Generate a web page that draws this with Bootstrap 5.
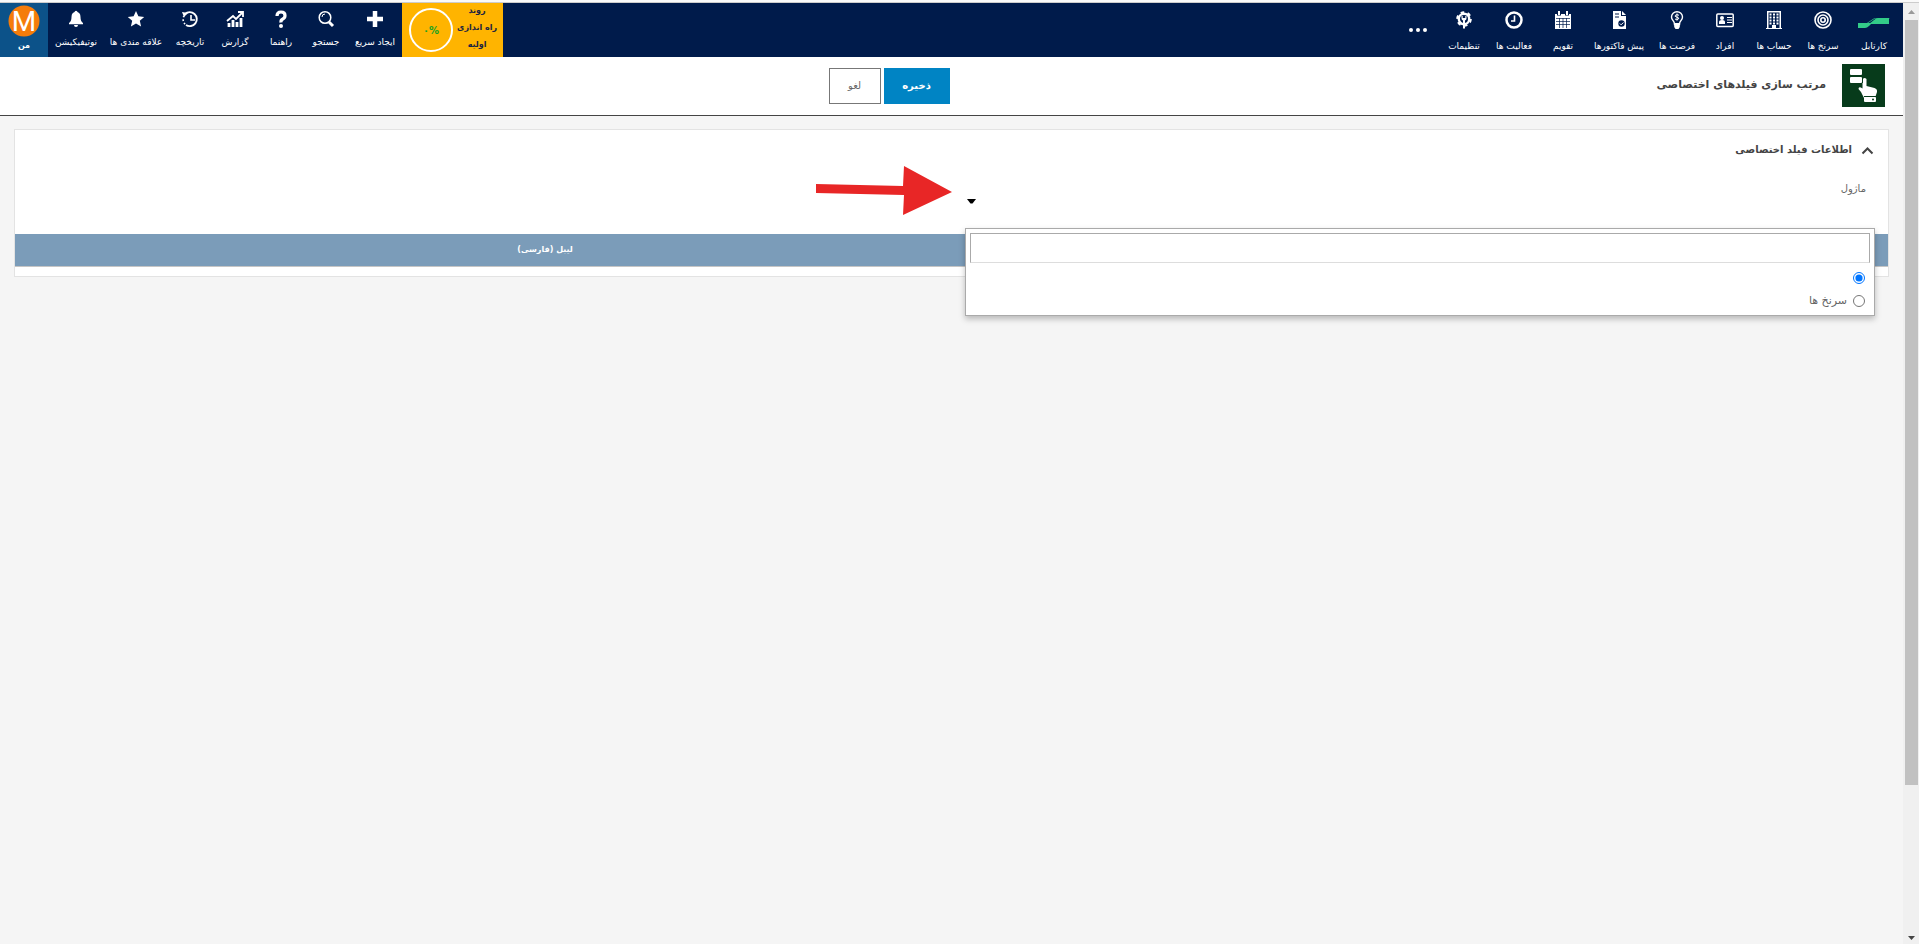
<!DOCTYPE html>
<html lang="fa" dir="rtl">
<head>
<meta charset="utf-8">
<meta name="viewport" content="width=device-width, initial-scale=1">
<title>مرتب سازی فیلدهای اختصاصی</title>
<link href="https://cdn.jsdelivr.net/npm/bootstrap@5.3.0/dist/css/bootstrap.min.css" rel="stylesheet">
<style>
body{font-family:"DejaVu Sans",sans-serif;background:#f5f5f5;color:#444;font-size:10px;height:100vh;overflow:hidden}
.top-strip{height:3px;background:#fafafa;border-bottom:1px solid #ccc}
.main-nav{background:#001b4b;height:54px}
.nav-tile{color:#fff;text-decoration:none;display:flex;flex-direction:column;align-items:center;font-size:9px;line-height:14px;white-space:nowrap;padding-top:7px;gap:7px}
.nav-tile svg{width:18px;height:18px;flex:none}
.apps .nav-tile{padding-top:8px;gap:10px}
.t42{width:42px}.t44{width:44px}.t46{width:46px}.t48{width:48px}.t50{width:50px}.t52{width:52px}.t54{width:54px}.t56{width:56px}.t58{width:58px}.t64{width:64px}
.nav-tile.brand-tile svg{width:32px}
.nav-tile.me-tile{width:48px;background:#0c5289;padding-top:2px;gap:2px;font-size:8px;font-weight:bold}
.me-tile svg{width:32px;height:32px}
.setup{width:101px;background:#ffb400;color:#1c2440;font-size:8px;font-weight:bold;line-height:17px;text-decoration:none;padding:0 6px 6px 7px;white-space:nowrap}
.ring{width:44px;height:44px;border:2px solid #fff;border-radius:50%;color:#1ca321;font-size:10px;margin-top:6px}
.page-head{border-bottom:1px solid #444;height:59px;padding:0 18px 2px}
.page-head h1{font-size:11px;line-height:20px;margin:0;font-weight:bold}
.module-icon{width:43px;height:43px}
.page-head .btn{border-radius:0;height:36px;font-size:10px;line-height:16px;padding:0}
.page-head .btn-save,.btn-save:hover{background:#0084c4;color:#fff;width:66px;font-weight:bold}
.page-head .btn-drop,.btn-drop:hover{border:1px solid #777;color:#666;width:52px;background:#fff}
.actions{gap:3px;padding:1px 2px 0}
.panel{background:#fff;border:1px solid #e3e3e3;margin:13px 14px}
.panel h2{font-size:10px;line-height:20px;margin:0;font-weight:bold}
.panel-title{padding:10px 14px 0;gap:9px}
.field-row{padding:21px 22px 0;height:74px}
.field-row label{font-size:10px;line-height:16px;color:#666}
.picker{width:50%;position:relative;padding-left:12px}
.caret{border:0;background:none;padding:0;width:12px;height:8px;display:block}
.menu{position:absolute;top:47px;right:-9px;left:13px;z-index:5;background:#fff;border:1px solid #aaa;box-shadow:0 3px 6px rgba(0,0,0,.25);height:88px;padding:4px}
.menu input[type=text]{width:100%;height:30px;border:1px solid #aaa;border-bottom-color:#ddd;display:block;outline:0}
.menu .opt{display:flex;align-items:center;gap:6px;height:23px;padding:0 5px;font-size:11px;color:#666}
.opt input{width:12px;height:12px;margin:0}
.menu .opts{padding-top:3px}
.fields{width:100%;margin-bottom:9px}
.fields th{background:#7b9cb9;color:#fff;height:32px;border-bottom:1px solid #c5c5c5;text-align:center;font-size:8px}
.fields .fa-col{width:56.6%}
.arrow{position:absolute;left:816px;top:108px;width:138px;height:52px}
.scroll{width:16px;flex:none;background:#f0f0f0;padding:0 1px 0 2px}
.thumb{background:#c1c1c1;height:81.3%}
.scroll svg{width:13px;height:17px;flex:none}
</style>
<script src="https://cdn.jsdelivr.net/npm/bootstrap@5.3.0/dist/js/bootstrap.bundle.min.js"></script>
</head>
<body class="d-flex flex-column">
<div class="top-strip"></div>
<div class="d-flex flex-fill">
<div class="scroll d-flex flex-column" aria-hidden="true" dir="ltr">
<svg viewBox="0 0 13 17"><path d="M3 11l3.500-4L10 11z" fill="#999"/></svg>
<div class="thumb"></div>
<svg class="mt-auto" viewBox="0 0 13 17"><path d="M3 9h7l-3.500 4z" fill="#444"/></svg>
</div>
<div class="flex-fill">
<nav class="main-nav d-flex justify-content-between">
<div class="apps d-flex">
<a href="#" class="nav-tile brand-tile t58"><svg viewBox="0 0 32 18"><path d="M11 13l5-4q2-2 4-2h11v6z" fill="#3c8"/><path d="M0 12h10l7-4.500h14.500V7H18q-2 0-3 1l-6 4H0v5h7q2 0 4-2l3-3h-3" fill="#3c8"/></svg>کارتابل</a>
<a href="#" class="nav-tile t44"><svg viewBox="0 0 18 18" fill="none" stroke="#fff" stroke-width="1.600"><circle cx="9" cy="9" r="8"/><circle cx="9" cy="9" r="5"/><circle cx="9" cy="9" r="2.200"/></svg>سرنخ ها</a>
<a href="#" class="nav-tile t54"><svg viewBox="0 0 18 18"><path d="M2 0h14v17h1v1H1v-1h1zM3.500 1.500V17H7v-3h4v3h3.500V1.500z" fill="#fff" fill-rule="evenodd"/><path d="M5.500 2.500v11M9 2.500v11M12.500 2.500v11" stroke="#fff" stroke-width="2" stroke-dasharray="2 1"/></svg>حساب ها</a>
<a href="#" class="nav-tile t44"><svg viewBox="0 0 18 18"><rect x=".8" y="3" width="16.400" height="12.500" rx="1" fill="none" stroke="#fff" stroke-width="1.500"/><circle cx="6" cy="7" r="2" fill="#fff"/><path d="M3 13v-2q0-2 3-2t3 2v2zM11 6h5v1h-5zM11 8.500h5v1h-5zM11 11h5v1h-5z" fill="#fff"/></svg>افراد</a>
<a href="#" class="nav-tile t52"><svg viewBox="0 0 18 18"><path d="M6.500 13.500Q6.500 11 5 9.500Q3.500 8 3.500 6a5.500 5.300 0 0 1 11 0q0 2-1.500 3.500t-1.500 4z" fill="none" stroke="#fff" stroke-width="1.400"/><path d="M6.200 12h5.600v4l-1.300 2h-3L6.200 16z" fill="#fff"/><path d="M11 4.300Q9 3 7.500 4.200T9 6.200t1.300 1.900T7 8M9 2.500v7" fill="none" stroke="#fff"/></svg>فرصت ها</a>
<a href="#" class="nav-tile t64"><svg viewBox="0 0 18 18"><path d="M3 0h8v5h5v13H3zM12 0l4 4h-4z" fill="#fff"/><path d="M5 3h4M5 6h4" stroke="#001b4b" stroke-width="1.200"/><circle cx="11.500" cy="12.500" r="3.200" fill="#001b4b"/><path d="M9.800 12.500l1.300 1.300 2.300-2.300" stroke="#fff" fill="none"/></svg>پیش فاکتورها</a>
<a href="#" class="nav-tile t48"><svg viewBox="0 0 18 18"><path d="M1 3h16v15H1z" fill="#fff"/><path d="M2 7.500h14M2 10.500h14M2 13.500h14M5.500 7v10M9 7v10M12.500 7v10" stroke="#001b4b" stroke-width=".7"/><path d="M5 1.500v3M13 1.500v3" stroke="#001b4b" stroke-width="4"/><path d="M5 0v4M13 0v4" stroke="#fff" stroke-width="2"/></svg>تقویم</a>
<a href="#" class="nav-tile t50"><svg viewBox="0 0 18 18" fill="none" stroke="#fff"><circle cx="9" cy="9" r="7.500" stroke-width="2.500"/><path d="M9.500 4.500V10H6" stroke-width="1.600"/></svg>فعالیت ها</a>
<a href="#" class="nav-tile t50"><svg viewBox="0 0 18 18"><circle cx="9" cy="8" r="5.200" fill="none" stroke="#fff" stroke-width="2.400"/><circle cx="9" cy="8" r="6.800" fill="none" stroke="#fff" stroke-width="2" stroke-dasharray="3.560 3.560"/><path d="M6.500 5v2.500q0 1.500 1.500 2V17.500h2V9.500q1.500-.5 1.500-2V5l-1.200 0v2H7.700V5z" fill="#fff"/></svg>تنظیمات</a>
<a href="#" class="nav-tile t42" aria-label="بیشتر"><svg viewBox="0 0 18 18" fill="#fff" class="mt-2"><circle cx="2" cy="11" r="2"/><circle cx="9" cy="11" r="2"/><circle cx="16" cy="11" r="2"/></svg></a>
</div>
<div class="d-flex">
<a href="#" class="setup d-flex align-items-center justify-content-between"><span class="text-center">روند<br>راه اندازی<br>اولیه</span><span class="ring d-flex align-items-center justify-content-center" dir="ltr">۰%</span></a>
<a href="#" class="nav-tile t54"><svg viewBox="0 0 18 18"><path d="M9 1v16M1 9h16" stroke="#fff" stroke-width="4.500"/></svg>ایجاد سریع</a>
<a href="#" class="nav-tile t44"><svg viewBox="0 0 18 18" fill="none" stroke="#fff"><circle cx="8" cy="7.500" r="5.800" stroke-width="1.500"/><path d="M12 12l4 4" stroke-width="3"/><path d="M5 7q0-3 3-3"/></svg>جستجو</a>
<a href="#" class="nav-tile t46"><svg viewBox="0 0 18 18"><path d="M5 6q0-4 4-4t4 3.500Q13 8 10.800 9T9 12.500" fill="none" stroke="#fff" stroke-width="3.200"/><circle cx="9" cy="16" r="2" fill="#fff"/></svg>راهنما</a>
<a href="#" class="nav-tile t46"><svg viewBox="0 0 18 18" fill="none" stroke="#fff"><path d="M3 17v-4M7 17v-7M11 17v-5M15 17V8" stroke-width="2.800"/><path d="M1 11l6-5 3 3 6-6M12 2h5v5" stroke-width="1.800"/></svg>گزارش</a>
<a href="#" class="nav-tile t44"><svg viewBox="0 0 18 18" fill="none" stroke="#fff"><path d="M4 4a7 7 0 1 1 1 11" stroke-width="1.900"/><path d="M3 6a7 7 0 0 0 2 9" stroke-width="1.600" stroke-dasharray="1.500 2"/><path d="M10 5v5h4" stroke-width="1.600"/><path d="M1 2l6 1-4 4z" fill="#fff" stroke="none"/></svg>تاریخچه</a>
<a href="#" class="nav-tile t64"><svg viewBox="0 0 18 18"><path d="M9 1l2.400 5.300 5.800.6-4.400 3.800 1.300 5.800L9 13.500l-5.100 3 1.300-5.800L.8 6.900l5.800-.6z" fill="#fff"/></svg>علاقه مندی ها</a>
<a href="#" class="nav-tile t56"><svg viewBox="0 0 18 18" fill="#fff"><circle cx="9" cy="2.200" r="1.500"/><path d="M9 2q4.500 0 4.500 5 0 4.500 2.500 6v1.200H2V13q2.500-1.500 2.500-6 0-5 4.500-5zM7 15h4q0 2-2 2t-2-2z"/></svg>نوتیفیکیشن</a>
<a href="#" class="nav-tile me-tile"><svg viewBox="0 0 32 32"><circle cx="16" cy="16" r="15.500" fill="#f57c0a"/><text x="16" y="26" text-anchor="middle" font-family="Roboto,sans-serif" font-weight="400" font-size="28" fill="#fff">M</text></svg>من</a>
</div>
</nav>
<main class="position-relative">
<header class="page-head bg-white d-flex align-items-center">
<div class="w-50 d-flex align-items-center gap-3">
<svg class="module-icon" viewBox="0 0 43 43"><path d="M0 0h43v43H0z" fill="#073b1b"/><g fill="#fff"><rect x="8" y="5" width="12" height="6" rx="1"/><rect x="8" y="13" width="12" height="6" rx="1"/><path d="M20.500 15q2-2 4 0v7l8 2q3 1 2.500 4l-2 6H22l-3-6-2.500-3q0-3 4-.5z"/><rect x="22" y="33" width="12" height="5" rx="1"/></g><path d="M20.500 19v-4q0-2 2-2" fill="none" stroke="#073b1b"/><path d="M22 32.500h12" stroke="#073b1b"/><circle cx="31" cy="35.500" r="1" fill="#073b1b"/></svg>
<h1>مرتب سازی فیلدهای اختصاصی</h1></div>
<div class="actions d-flex"><button type="button" class="btn btn-save">ذخیره</button><button type="button" class="btn btn-drop">لغو</button></div>
</header>
<section class="panel">
<div class="panel-title d-flex align-items-center"><svg width="13" height="9" viewBox="0 0 13 9"><path d="M1.500 7.500l5-5 5 5" fill="none" stroke="#444" stroke-width="2"/></svg><h2>اطلاعات فیلد اختصاصی</h2></div>
<div class="field-row"><div class="picker">
<label for="moduleSearch">ماژول</label>
<div class="d-flex justify-content-end"><button type="button" class="caret" aria-label="باز کردن فهرست"><svg class="d-block" width="9" height="5" viewBox="0 0 9 5"><path d="M0 0h9L5.500 4.500h-2z" fill="#000"/></svg></button></div>
<div class="menu"><input type="text" id="moduleSearch">
<div class="opts"><label class="opt"><input type="radio" name="module" checked aria-label="خالی"></label>
<label class="opt"><input type="radio" name="module">سرنخ ها</label></div></div>
</div></div>
<table class="fields"><thead><tr><th></th><th class="fa-col">لیبل (فارسی)</th></tr></thead></table>
</section>
<svg class="arrow" viewBox="0 0 138 52"><path d="M0 19l87 2 1-20 48 26-49 23 1-20-88-2z" fill="#e82626"/></svg>
</main>
</div>
</div>
</body>
</html>
